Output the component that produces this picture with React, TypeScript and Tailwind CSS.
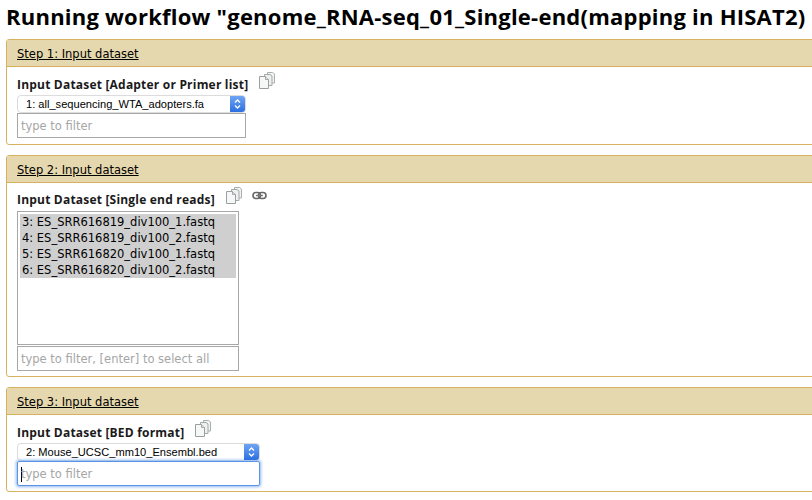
import React from "react";

function CopyIcon() {
  return (
    <svg width="16" height="17" viewBox="0 0 16 17" className="shrink-0">
      <path d="M8.500.5h5l2 1.500v9h-7z" fill="#f2f4f4" stroke="#a9afaf" />
      <path d="M5.500 2.500h5.500l2 1.500v9.500h-7.500z" fill="#eef0f0" stroke="#a3a9a9" />
      <path d="M.5 4.500h6l3 3v9h-9z" fill="#f6f7f7" stroke="#9aa0a0" />
      <path d="M6.500 4.500v3h3" fill="#dfe2e2" stroke="#a3a9a9" />
    </svg>
  );
}

function LinkIcon() {
  return (
    <svg width="15" height="9" viewBox="0 0 15 9" className="shrink-0">
      <rect x="1" y="1.500" width="7.500" height="6" rx="3" fill="none" stroke="#666" strokeWidth="1.600" />
      <rect x="6.500" y="1.500" width="7.500" height="6" rx="3" fill="none" stroke="#666" strokeWidth="1.600" />
      <rect x="4" y="3.800" width="7" height="1.400" fill="#777" />
    </svg>
  );
}

function Select({ label, width }: { label: string; width: string }) {
  return (
    <div className={`flex h-[18px] ${width} overflow-hidden rounded-[4px] border border-[#dcdcdc] bg-white`}>
      <div className="flex-1 pl-[8px] font-['Liberation_Sans',sans-serif] text-[11.100px] leading-[16px] text-black">
        {label}
      </div>
      <div className="flex w-[15px] items-center justify-center bg-gradient-to-b from-[#6ea4f4] to-[#2b6fe0]">
        <svg width="7" height="12" viewBox="0 0 7 12">
          <path d="M1 4.500 3.500 2 6 4.500M1 7.500 3.500 10 6 7.500" fill="none" stroke="#fff" strokeWidth="1.300" />
        </svg>
      </div>
    </div>
  );
}

function Panel({ title, children }: { title: string; children: React.ReactNode }) {
  return (
    <section className="w-[830px] rounded-[3px] border border-[#d6b161]">
      <div className="flex h-[27px] items-center border-b border-[#d6b161] bg-[#e6d8ae] pl-[10px] pt-[3px]">
        <span className="text-[11.500px] text-black underline">{title}</span>
      </div>
      <div className="pl-[10px]">{children}</div>
    </section>
  );
}

const labelCls = "font-['Open_Sans',sans-serif] text-[12px] font-bold leading-[16px] text-[#1a1a1a] tracking-[0.200px]";

export default function App() {
  return (
    <div className="h-[500px] w-[812px] overflow-hidden bg-white font-['DejaVu_Sans',sans-serif] text-black">
      <h1 className="whitespace-nowrap pl-[6px] pt-[3px] pb-[1px] font-['Open_Sans',sans-serif] text-[22px] font-bold leading-[27px] tracking-[0.230px]">
        Running workflow "genome_RNA-seq_01_Single-end(mapping in HISAT2)
      </h1>
      <div className="flex flex-col pl-[6px] pt-[8px]">
        <Panel title="Step 1: Input dataset">
          <div className="flex h-[27px] items-end">
            <span className={`${labelCls} mb-[1px]`}>Input Dataset [Adapter or Primer list]</span>
            <div className="mb-[5px] ml-[11px]"><CopyIcon /></div>
          </div>
          <div className="mt-[1px]"><Select label="1: all_sequencing_WTA_adopters.fa" width="w-[229px]" /></div>
          <div className="flex h-[25px] w-[229px] items-center border border-[#a8a8a8] pl-[3px] pt-[2px] text-[11.500px] text-[#a6a6a6]">type to filter</div>
          <div className="h-[6px]" />
        </Panel>
        <div className="h-[10px]" />
        <Panel title="Step 2: Input dataset">
          <div className="flex h-[27px] items-end">
            <span className={`${labelCls} mb-[2px]`}>Input Dataset [Single end reads]</span>
            <div className="mb-[6px] ml-[11px]"><CopyIcon /></div>
            <div className="mb-[10px] ml-[10px]"><LinkIcon /></div>
          </div>
          <div className="mt-[1px] h-[134px] w-[222px] border border-[#a8a8a8] p-[2px]">
            {["3: ES_SRR616819_div100_1.fastq", "4: ES_SRR616819_div100_2.fastq", "5: ES_SRR616820_div100_1.fastq", "6: ES_SRR616820_div100_2.fastq"].map((t) => (
              <div key={t} className="h-[16px] bg-[#cfcfcf] pl-[2px] text-[11.500px] leading-[16px]">{t}</div>
            ))}
          </div>
          <div className="mt-[1px] flex h-[25px] w-[222px] items-center border border-[#a8a8a8] pl-[3px] pt-[2px] text-[11.500px] text-[#a6a6a6]">type to filter, [enter] to select all</div>
          <div className="h-[5px]" />
        </Panel>
        <div className="h-[10px]" />
        <Panel title="Step 3: Input dataset">
          <div className="flex h-[27px] items-end">
            <span className={`${labelCls} mb-[1px]`}>Input Dataset [BED format]</span>
            <div className="mb-[5px] ml-[11px]"><CopyIcon /></div>
          </div>
          <div className="mt-[1px]"><Select label="2: Mouse_UCSC_mm10_Ensembl.bed" width="w-[243px]" /></div>
          <div className="flex h-[25px] w-[243px] items-center rounded-[2px] border border-[#5b93e6] pl-[3px] pt-[2px] text-[11.500px] text-[#a6a6a6] shadow-[0_0_3px_1px_#8db8f2]">
            <span className="mr-[-1px] h-[15px] w-[1px] bg-black" />
            type to filter
          </div>
          <div className="h-[5px]" />
        </Panel>
      </div>
    </div>
  );
}
